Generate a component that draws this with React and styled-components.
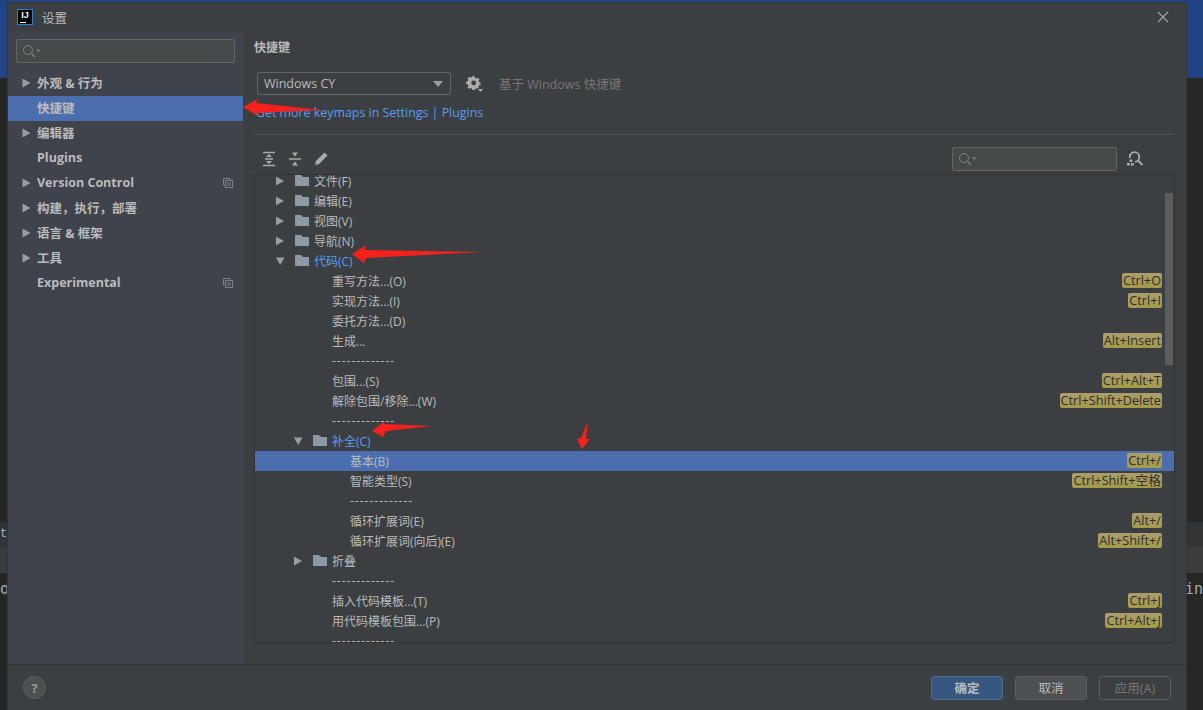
import React from 'react';
import styled, { createGlobalStyle } from 'styled-components';

const UI_FONT = '"Open Sans", "Noto Sans CJK SC", sans-serif';

const GlobalStyle = createGlobalStyle`
  html, body { margin: 0; padding: 0; background: #262626; }
  * { box-sizing: border-box; }
`;

const Page = styled.div`
  position: relative;
  width: 1203px;
  height: 710px;
  overflow: hidden;
  background: #262626;
  font-family: ${UI_FONT};
  font-size: 12px;
  color: #bbbbbb;
`;

/* the IDE window behind the dialog */
const IdeTop = styled.div`
  height: 78px;
  background: #214283;
`;
const IdeTabs = styled.div`
  margin-top: 444px;
  height: 25px;
  background: #313335;
  font: 12px "Liberation Mono", monospace;
  line-height: 25px;
  color: #aaaaaa;
`;
const IdeStrip = styled.div`
  height: 26px;
  background: #3a3c3e;
`;
const IdeCode = styled.div`
  display: flex;
  justify-content: space-between;
  padding-top: 6px;
  font: 15px "DejaVu Sans Mono", monospace;
  line-height: 20px;
  color: #a9a9a9;
`;

const Dialog = styled.div`
  position: absolute;
  left: 8px;
  top: 3px;
  width: 1178px;
  height: 707px;
  display: flex;
  flex-direction: column;
  background: #3c3f41;
  box-shadow: 0 0 0 1px #333537;
`;

const TitleBar = styled.div`
  height: 28px;
  flex: none;
  display: flex;
  align-items: center;
  padding: 0 17px 0 9px;
  font-size: 12.5px;
  color: #bbbbbb;
`;
const Logo = styled.div`
  position: relative;
  width: 16px;
  height: 16px;
  margin-right: 9px;
  background: #000;
  border: 1px solid #2d7fd0;
  font: bold 9px/10px "Liberation Sans", sans-serif;
  color: #fff;
  text-align: center;
  &::after {
    content: "";
    position: absolute;
    left: 2px;
    bottom: 1px;
    width: 6px;
    height: 1px;
    background: #fff;
  }
`;
const CloseButton = styled.svg`
  margin-left: auto;
  width: 12px;
  height: 12px;
`;

const Body = styled.div`
  flex: 1;
  min-height: 0;
  display: flex;
`;

const Sidebar = styled.div`
  width: 235px;
  flex: none;
  padding-top: 8px;
  background: #3e434c;
`;
const SideSearch = styled.div`
  height: 24px;
  margin: 0 8px 8px;
  padding-left: 5px;
  display: flex;
  align-items: center;
  background: #45494a;
  border: 1px solid #646464;
  border-radius: 2px;
`;
const SideRow = styled.div`
  height: 25px;
  display: flex;
  align-items: center;
  padding: 0 10px 2px 14px;
  background: ${p => (p.$selected ? '#4b6eaf' : 'transparent')};
  font-weight: 700;
  font-size: 12.5px;
`;
const SideArrow = styled.span`
  width: 15px;
  flex: none;
  display: flex;
`;
const SideBadge = styled.svg`
  margin-left: auto;
  width: 10px;
  height: 10px;
`;

const Content = styled.div`
  flex: 1;
  min-width: 0;
  display: flex;
  flex-direction: column;
  padding: 8px 11px 21px;
`;
const Heading = styled.div`
  height: 18px;
  line-height: 18px;
  font-weight: 600;
`;
const KeymapRow = styled.div`
  margin: 15px 0 0 3px;
  height: 23px;
  display: flex;
  align-items: center;
`;
const Select = styled.div`
  width: 194px;
  height: 23px;
  display: flex;
  align-items: center;
  justify-content: space-between;
  padding: 0 7px 0 6px;
  border: 1px solid #646464;
  border-radius: 2px;
  background: #3c3f41;
  font-size: 12.5px;
`;
const GearWrap = styled.svg`
  width: 18px;
  height: 18px;
  margin: 0 15px 0 15px;
`;
const Hint = styled.span`
  font-size: 12.5px;
  color: #777777;
`;
const LinkLine = styled.div`
  margin: 9px 0 0 2px;
  height: 18px;
  line-height: 18px;
  font-size: 12.4px;
  color: #589df6;
`;
const Divider = styled.div`
  margin-top: 12px;
  height: 1px;
  background: #515151;
`;
const Toolbar = styled.div`
  margin-top: 12px;
  height: 24px;
  display: flex;
  align-items: center;
  padding-left: 7px;
  gap: 10px;
`;
const ToolIcon = styled.svg`
  width: 16px;
  height: 16px;
`;
const FilterBox = styled.div`
  margin-left: auto;
  width: 165px;
  height: 24px;
  padding-left: 5px;
  display: flex;
  align-items: center;
  background: #45494a;
  border: 1px solid #646464;
  border-radius: 2px;
`;
const FindIcon = styled.svg`
  width: 18px;
  height: 18px;
  margin: 0 31px 0 -1px;
`;

const TreeBox = styled.div`
  position: relative;
  margin-top: 3px;
  flex: 1;
  min-height: 0;
  overflow: hidden;
  border: 1px solid #323232;
`;
const TreeList = styled.div`
  margin-top: -4px;
`;
const TreeRow = styled.div`
  height: 20px;
  display: flex;
  align-items: center;
  padding: 0 12px 1px ${p => 20 + p.$depth * 18}px;
  background: ${p => (p.$selected ? '#4b6eaf' : 'transparent')};
  white-space: nowrap;
`;
const Twist = styled.svg`
  width: 10px;
  height: 10px;
  flex: none;
  margin-right: 10px;
`;
const Folder = styled.svg`
  width: 14px;
  height: 11px;
  flex: none;
  margin-right: 5px;
`;
const LeafGap = styled.span`
  width: 39px;
  flex: none;
`;
const RowLabel = styled.span`
  color: ${p => (p.$open ? '#589df6' : '#bbbbbb')};
  letter-spacing: ${p => (p.$sep ? '1px' : '0')};
`;
const Shortcut = styled.span`
  margin-left: auto;
  height: 15px;
  line-height: 15px;
  padding: 0 1px;
  border-radius: 2px;
  font-size: 12.7px;
  background: linear-gradient(#ad9d6c, #a39b48);
  color: #2f2f2f;
`;
const ScrollThumb = styled.div`
  position: absolute;
  right: 1px;
  top: 18px;
  width: 8px;
  height: 172px;
  background: #5a5c5e;
`;

const Footer = styled.div`
  height: 46px;
  flex: none;
  display: flex;
  align-items: center;
  gap: 12px;
  padding: 0 15px 0 15px;
  border-top: 1px solid #323232;
`;
const Help = styled.div`
  width: 23px;
  height: 23px;
  margin-right: auto;
  border-radius: 50%;
  background: #4c5052;
  border: 1px solid #5e6060;
  display: flex;
  align-items: center;
  justify-content: center;
  font-weight: 700;
  font-size: 13px;
  color: #9a9a9a;
`;
const Button = styled.div`
  width: 72px;
  height: 24px;
  display: flex;
  align-items: center;
  justify-content: center;
  border-radius: 3px;
  font-size: 12.5px;
  border: 1px solid ${p => (p.$kind === 'primary' ? '#4c708c' : '#5e6060')};
  background: ${p =>
    p.$kind === 'primary' ? '#365880' : p.$kind === 'disabled' ? 'transparent' : '#4c5052'};
  color: ${p => (p.$kind === 'disabled' ? '#777777' : '#bbbbbb')};
  font-weight: ${p => (p.$kind === 'primary' ? 600 : 400)};
`;

const ArrowLayer = styled.svg`
  position: absolute;
  left: 0;
  top: 0;
  width: 1203px;
  height: 710px;
  pointer-events: none;
`;

const SearchGlyph = () => (
  <svg width="20" height="14" viewBox="0 0 20 14">
    <circle cx="6" cy="6" r="4.5" fill="none" stroke="#7f8385" strokeWidth="1" />
    <path d="M9.5 9.5 L13 13" stroke="#7f8385" strokeWidth="1.2" />
    <path d="M14 5.5 h4.5 l-2.25 2.5 z" fill="#7f8385" />
  </svg>
);

const Triangle = ({ open }) => (
  <Twist viewBox="0 0 10 10">
    {open
      ? <path d="M1 1.5 H9.5 L5.2 9 Z" fill="#9a9da0" />
      : <path d="M1 0.5 L9 5 L1 9.5 Z" fill="#9a9da0" />}
  </Twist>
);

const FolderIcon = () => (
  <Folder viewBox="0 0 14 11">
    <path d="M0 0 H6 L8 2 H14 V11 H0 Z" fill="#8c9aa6" />
  </Folder>
);

const CopyBadge = () => (
  <SideBadge viewBox="0 0 10 10">
    <path d="M0.5 0.5 H7 V2.5 M0.5 0.5 V7 H2.5" fill="none" stroke="#7d8186" />
    <rect x="2.5" y="2.5" width="7" height="7" fill="none" stroke="#7d8186" />
    <path d="M4 5 H8 M4 7 H8" stroke="#7d8186" />
  </SideBadge>
);

const sideItems = [
  { label: '外观 & 行为', arrow: true },
  { label: '快捷键', selected: true },
  { label: '编辑器', arrow: true },
  { label: 'Plugins' },
  { label: 'Version Control', arrow: true, badge: true },
  { label: '构建，执行，部署', arrow: true },
  { label: '语言 & 框架', arrow: true },
  { label: '工具', arrow: true },
  { label: 'Experimental', badge: true }
];

const SEP = '-------------';

const rows = [
  { label: '文件(F)', depth: 0, folder: true },
  { label: '编辑(E)', depth: 0, folder: true },
  { label: '视图(V)', depth: 0, folder: true },
  { label: '导航(N)', depth: 0, folder: true },
  { label: '代码(C)', depth: 0, folder: true, open: true },
  { label: '重写方法...(O)', depth: 1, keys: 'Ctrl+O' },
  { label: '实现方法...(I)', depth: 1, keys: 'Ctrl+I' },
  { label: '委托方法...(D)', depth: 1 },
  { label: '生成...', depth: 1, keys: 'Alt+Insert' },
  { label: SEP, depth: 1 },
  { label: '包围...(S)', depth: 1, keys: 'Ctrl+Alt+T' },
  { label: '解除包围/移除...(W)', depth: 1, keys: 'Ctrl+Shift+Delete' },
  { label: SEP, depth: 1 },
  { label: '补全(C)', depth: 1, folder: true, open: true },
  { label: '基本(B)', depth: 2, keys: 'Ctrl+/', selected: true },
  { label: '智能类型(S)', depth: 2, keys: 'Ctrl+Shift+空格' },
  { label: SEP, depth: 2 },
  { label: '循环扩展词(E)', depth: 2, keys: 'Alt+/' },
  { label: '循环扩展词(向后)(E)', depth: 2, keys: 'Alt+Shift+/' },
  { label: '折叠', depth: 1, folder: true },
  { label: SEP, depth: 1 },
  { label: '插入代码模板...(T)', depth: 1, keys: 'Ctrl+J' },
  { label: '用代码模板包围...(P)', depth: 1, keys: 'Ctrl+Alt+J' },
  { label: SEP, depth: 1 }
];

const App = () => {
  return (
    <Page>
      <GlobalStyle />
      <IdeTop />
      <IdeTabs>t(</IdeTabs>
      <IdeStrip />
      <IdeCode>
        <span>or</span>
        <span>in</span>
      </IdeCode>

      <Dialog>
        <TitleBar>
          <Logo>IJ</Logo>
          设置
          <CloseButton viewBox="0 0 12 12">
            <path d="M1 1 L11 11 M11 1 L1 11" stroke="#a4a6a8" strokeWidth="1.1" />
          </CloseButton>
        </TitleBar>

        <Body>
          <Sidebar>
            <SideSearch><SearchGlyph /></SideSearch>
            {sideItems.map(item => (
              <SideRow key={item.label} $selected={item.selected}>
                <SideArrow>
                  {item.arrow && (
                    <svg width="9" height="10" viewBox="0 0 9 10">
                      <path d="M0.5 0.5 L8.5 5 L0.5 9.5 Z" fill="#9a9da0" />
                    </svg>
                  )}
                </SideArrow>
                {item.label}
                {item.badge && <CopyBadge />}
              </SideRow>
            ))}
          </Sidebar>

          <Content>
            <Heading>快捷键</Heading>
            <KeymapRow>
              <Select>
                Windows CY
                <svg width="10" height="6" viewBox="0 0 10 6">
                  <path d="M0 0 H10 L5 6 Z" fill="#9a9da0" />
                </svg>
              </Select>
              <GearWrap viewBox="0 0 18 18">
                <path
                  d="M7 1.5 h3 l.4 2 1.5.7 1.8-1.1 2 2-1.1 1.8.7 1.5 1.7.4 v2.6 l-1.7.4-.7 1.5 .6 1-1.9 1.6-1-.6-1.5.7-.4 1.5 h-3 l-.4-1.7-1.5-.7-1.8 1.1-2-2 1.1-1.8-.7-1.5-2-.4 v-2.8 l2-.4 .7-1.5-1.1-1.8 2-2 1.8 1.1 1.5-.7 z"
                  fill="#a9abad"
                  transform="scale(0.86)"
                />
                <circle cx="7.7" cy="7.9" r="2.4" fill="#3c3f41" />
                <path d="M12 14 h5 l-2.5 3 z" fill="#a9abad" />
              </GearWrap>
              <Hint>基于 Windows 快捷键</Hint>
            </KeymapRow>
            <LinkLine>Get more keymaps in Settings | Plugins</LinkLine>
            <Divider />
            <Toolbar>
              <ToolIcon viewBox="0 0 16 16">
                <path d="M2 1.5 H14 M2 14.5 H14 M4 8 H12" stroke="#a9abad" strokeWidth="1.5" />
                <path d="M8 3 L11 6 H5 Z M8 13 L5 10 H11 Z" fill="#a9abad" />
              </ToolIcon>
              <ToolIcon viewBox="0 0 16 16">
                <path d="M2 8 H14" stroke="#a9abad" strokeWidth="1.5" />
                <path d="M5 1.5 H11 L8 5.5 Z M8 10.5 L11 14.5 H5 Z" fill="#a9abad" />
              </ToolIcon>
              <ToolIcon viewBox="0 0 16 16">
                <path d="M11.5 1.5 L14.5 4.5 L6 13 L2 14 L3 10 Z" fill="#a9abad" />
              </ToolIcon>
              <FilterBox><SearchGlyph /></FilterBox>
              <FindIcon viewBox="0 0 18 18">
                <circle cx="8.5" cy="7" r="4.8" fill="none" stroke="#a9abad" strokeWidth="1.8" />
                <path d="M12 10.5 L16.5 15" stroke="#a9abad" strokeWidth="2" />
                <rect x="0" y="8" width="9" height="10" fill="#3c3f41" />
                <path d="M3.5 9.5 h2.8 v2.6 h-2.8 z M1 13 h2.8 v2.6 h-2.8 z M5 13 h2.8 v2.6 h-2.8 z" fill="#a9abad" />
              </FindIcon>
            </Toolbar>

            <TreeBox>
              <TreeList>
                {rows.map((row, i) => (
                  <TreeRow key={i} $depth={row.depth} $selected={row.selected}>
                    {row.folder ? (
                      <>
                        <Triangle open={row.open} />
                        <FolderIcon />
                      </>
                    ) : (
                      <LeafGap />
                    )}
                    <RowLabel $open={row.open} $sep={row.label === SEP}>{row.label}</RowLabel>
                    {row.keys && <Shortcut>{row.keys}</Shortcut>}
                  </TreeRow>
                ))}
              </TreeList>
              <ScrollThumb />
            </TreeBox>
          </Content>
        </Body>

        <Footer>
          <Help>?</Help>
          <Button $kind="primary">确定</Button>
          <Button>取消</Button>
          <Button $kind="disabled">应用(A)</Button>
        </Footer>
      </Dialog>

      <ArrowLayer viewBox="0 0 1203 710">
        <polygon points="243,107 258,99 256,103 322,110 256,113 258,116" fill="#f5211c" />
        <polygon points="352,254 366,245 365,250 483,252 366,258 364,263" fill="#f5211c" />
        <polygon points="372,431 385,421 384,424 432,426 386,431 383,437" fill="#f5211c" />
        <polygon points="582,449 577,439 581,438 588,421 586,439 590,439" fill="#f5211c" />
      </ArrowLayer>
    </Page>
  );
};

export default App;
